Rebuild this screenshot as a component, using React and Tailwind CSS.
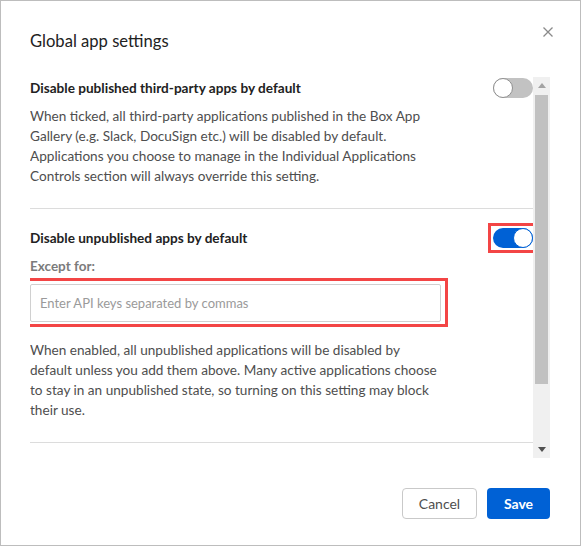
import React from "react";

function Toggle({ on }) {
  return (
    <div
      className={
        "relative w-[40px] h-[20px] rounded-full shrink-0 " +
        (on ? "bg-[#0061d5]" : "bg-[#c2c2c2]")
      }
    >
      <div
        className={
          "absolute top-0 w-[20px] h-[20px] rounded-full bg-white border " +
          (on ? "right-0 border-[#0061d5]" : "left-0 border-[#8f8f8f]")
        }
      />
    </div>
  );
}

export default function App() {
  return (
    <div className="relative w-[581px] h-[546px] bg-white border border-[#bdbdbd] font-['Lato',sans-serif] text-[#4e4e4e]">
      <button className="absolute top-[26px] right-[27px] w-[10px] h-[10px] text-[#8a8a8a]">
        <svg width="10" height="10" viewBox="0 0 10 10">
          <path d="M0.5 0.5 L9.5 9.5 M9.5 0.5 L0.5 9.5" stroke="currentColor" strokeWidth="1.3" fill="none" />
        </svg>
      </button>

      <div className="pl-[29px] pt-[28px]">
        <h2 className="text-[16.6px] leading-[24px] text-[#222]">Global app settings</h2>
      </div>

      <div className="mt-[24px] pl-[29px] flex h-[381px]">
        <div className="flex-1 overflow-hidden pt-[1px]">
          <div className="flex items-center justify-between h-[20px]">
            <h3 className="text-[13.6px] font-bold text-[#222]">
              Disable published third-party apps by default
            </h3>
            <Toggle on={false} />
          </div>
          <p className="mt-[8px] w-[410px] text-[13.6px] leading-[20px]">
            When ticked, all third-party applications published in the Box App Gallery (e.g. Slack,
            DocuSign etc.) will be disabled by default. Applications you choose to manage in the
            Individual Applications Controls section will always override this setting.
          </p>
          <div className="mt-[22px] border-t border-[#dcdcdc]" />

          <div className="mt-[19px] flex items-center justify-between h-[20px]">
            <h3 className="text-[13.6px] font-bold text-[#222]">Disable unpublished apps by default</h3>
            <div className="relative">
              <Toggle on={true} />
              <span className="absolute -left-[5px] -right-[5px] -top-[5px] -bottom-[5px] border-[3px] border-[#f34545]" />
            </div>
          </div>
          <div className="mt-[8px] text-[13.5px] leading-[20px] font-bold text-[#7b7b7b]">Except for:</div>
          <div className="relative mt-[8px] w-[411px]">
            <input
              className="w-[411px] h-[38px] border border-[#d0d0d0] rounded-[2px] px-[9px] text-[13px] placeholder-[#9a9a9a] outline-none"
              placeholder="Enter API keys separated by commas"
            />
            <span className="absolute -left-[7px] -right-[7px] -top-[6px] -bottom-[5px] border-[3px] border-[#f34545]" />
          </div>
          <p className="mt-[18px] w-[410px] text-[13.6px] leading-[20px]">
            When enabled, all unpublished applications will be disabled by default unless you add
            them above. Many active applications choose to stay in an unpublished state, so turning
            on this setting may block their use.
          </p>
          <div className="mt-[22px] border-t border-[#dcdcdc]" />
        </div>

        <div className="w-[17px] h-[381px] bg-[#f0f0f0] flex flex-col items-center shrink-0 mr-[30px]">
          <div className="h-[17px] w-full flex items-center justify-center">
            <svg width="8" height="5" viewBox="0 0 8 5">
              <path d="M4 0 L8 5 L0 5 Z" fill="#a3a3a3" />
            </svg>
          </div>
          <div className="mt-[1px] w-[13px] h-[289px] bg-[#c1c1c1]" />
          <div className="flex-1" />
          <div className="h-[17px] w-full flex items-center justify-center">
            <svg width="8" height="5" viewBox="0 0 8 5">
              <path d="M0 0 L8 0 L4 5 Z" fill="#505050" />
            </svg>
          </div>
        </div>
      </div>

      <div className="mt-[30px] pr-[30px] flex justify-end gap-[10px]">
        <button className="w-[75px] h-[31px] border border-[#c9c9c9] rounded-[4px] text-[14px] text-[#4e4e4e] bg-white">
          Cancel
        </button>
        <button className="w-[63px] h-[31px] rounded-[4px] text-[14px] font-bold text-white bg-[#0061d5]">
          Save
        </button>
      </div>
    </div>
  );
}
